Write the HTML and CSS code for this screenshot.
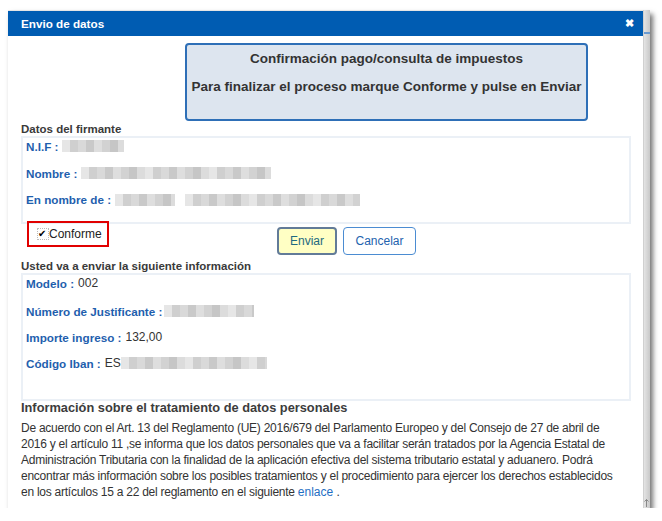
FILE: index.html
```html
<!DOCTYPE html>
<html lang="es">
<head>
<meta charset="utf-8">
<title>Envio de datos</title>
<link rel="stylesheet" href="styles.css">
</head>
<body>
<div class="dialog">
  <div class="dlg-main">
    <div class="titlebar">
      <span class="title">Envio de datos</span>
      <span class="close">&#x2716;</span>
    </div>
    <div class="content">
      <div class="notice">
        <p class="notice-line">Confirmación pago/consulta de impuestos</p>
        <p class="notice-line">Para finalizar el proceso marque Conforme y pulse en Enviar</p>
      </div>

      <div class="section-title">Datos del firmante</div>
      <div class="panel panel-signer">
        <div class="row"><span class="lbl">N.I.F :</span><span class="redact r-nif"></span></div>
        <div class="row"><span class="lbl">Nombre :</span><span class="redact r-name"></span></div>
        <div class="row"><span class="lbl">En nombre de :</span><span class="redact r-onb1"></span><span class="redact r-onb2"></span></div>
      </div>

      <div class="actions">
        <label class="conforme"><span class="check">&#10004;</span>Conforme</label>
        <div class="buttons">
          <button class="btn btn-send">Enviar</button>
          <button class="btn btn-cancel">Cancelar</button>
        </div>
      </div>

      <div class="section-title st2">Usted va a enviar la siguiente información</div>
      <div class="panel panel-info">
        <div class="row"><span class="lbl">Modelo :</span><span class="val">002</span></div>
        <div class="row"><span class="lbl">Número de Justificante :</span><span class="redact r-just"></span></div>
        <div class="row"><span class="lbl">Importe ingreso :</span><span class="val">132,00</span></div>
        <div class="row"><span class="lbl">Código Iban :</span><span class="val">ES</span><span class="redact r-iban"></span></div>
      </div>

      <h2 class="privacy-title">Información sobre el tratamiento de datos personales</h2>
      <p class="privacy-text">De acuerdo con el Art. 13 del Reglamento (UE) 2016/679 del Parlamento Europeo y del Consejo de 27 de abril de 2016 y el artículo 11 ,se informa que los datos personales que va a facilitar serán tratados por la Agencia Estatal de Administración Tributaria con la finalidad de la aplicación efectiva del sistema tributario estatal y aduanero. Podrá encontrar más información sobre los posibles tratamientos y el procedimiento para ejercer los derechos establecidos en los artículos 15 a 22 del reglamento en el siguiente <a class="link" href="#">enlace</a><span class="dot"> .</span></p>
    </div>
  </div>
  <div class="scrollbar">
    <span class="thumb"></span>
    <svg class="arrow" width="5" height="8" viewBox="0 0 5 8"><path d="M2.5 0.5 V8 M0.5 2.5 L2.5 0.5 L4.5 2.5" stroke="#888" stroke-width="1" fill="none"/></svg>
  </div>
</div>
</body>
</html>
```

FILE: styles.css
```css
html, body {
  margin: 0;
  padding: 0;
  background: #ffffff;
}
body {
  font-family: "Liberation Sans", Arial, sans-serif;
  color: #333333;
}
.dialog {
  margin: 10px 0 0 8px;
  width: 642px;
  height: 498px;
  display: flex;
  background: #ffffff;
  box-shadow: 3px 4px 5px rgba(0, 0, 0, 0.55);
  overflow: hidden;
}
.dlg-main {
  flex: 1;
  display: flex;
  flex-direction: column;
  border-top: 1px solid #e6e6e6;
  min-height: 0;
}
.titlebar {
  flex: 0 0 25px;
  height: 25px;
  background: #005cb2;
  color: #fff;
  display: flex;
  align-items: center;
  justify-content: space-between;
  padding: 0 9px 0 13px;
}
.title {
  font-weight: bold;
  font-size: 11.7px;
}
.close {
  font-size: 11px;
  font-weight: bold;
}
.scrollbar {
  width: 6px;
  background: linear-gradient(90deg, #e4e4e4, #c8c8c8);
  border-left: 1px solid #d0d0d0;
  position: relative;
}
.thumb {
  position: absolute;
  top: 22px;
  left: 0;
  width: 6px;
  height: 2px;
  background: #6a9ad0;
}
.arrow {
  position: absolute;
  bottom: 1px;
  left: 0;
}
.content {
  flex: 1 1 auto;
  min-height: 0;
  padding: 7px 12px 0 13px;
}
.notice {
  margin-left: 164px;
  width: 399px;
  height: 68px;
  border: 2px solid #2e6fb7;
  border-radius: 4px;
  background: #dde5ef;
  padding-top: 6px;
}
.notice-line {
  margin: 0 0 13px;
  text-align: center;
  font-weight: bold;
  font-size: 13.5px;
  line-height: 15px;
  color: #333;
}
.section-title {
  font-weight: bold;
  font-size: 11.5px;
  color: #3a3a3a;
  line-height: 13px;
  margin-top: 2px;
}
.st2 {
  margin-top: 2px;
}
.panel {
  border: 2px solid #ebf0f6;
  padding: 0 0 0 3px;
}
.panel-signer {
  height: 84px;
}
.panel-info {
  height: 124px;
}
.row {
  display: flex;
  align-items: center;
  height: 26px;
  font-size: 12px;
}
.panel-signer .row:nth-child(2),
.panel-signer .row:nth-child(3) {
  height: 26.5px;
}
.panel-info .row:first-child,
.panel-signer .row:first-child {
  height: 16px;
  margin-bottom: 7px;
}
.panel-signer .row:first-child {
  margin-bottom: 6px;
}
.lbl {
  color: #1f5fae;
  font-weight: bold;
  font-size: 11.7px;
  margin-right: 4px;
}
.val {
  color: #333;
}
.redact {
  display: inline-block;
  height: 12px;
  filter: blur(0.6px);
  background:
    linear-gradient(90deg,
      #e6e6e6 0 8px, #cfcfcf 8px 16px, #d9d9d9 16px 24px, #c9c9c9 24px 32px,
      #dedede 32px 40px, #d2d2d2 40px 48px, #c6c6c6 48px 56px, #dcdcdc 56px 64px);
  background-size: 64px 12px;
}
.r-nif { width: 62px; }
.r-name { width: 190px; }
.r-onb1 { width: 60px; }
.r-onb2 { width: 175px; margin-left: 10px; }
.r-just { width: 90px; margin-left: -2px; }
.r-iban { width: 146px; }
.actions {
  display: flex;
  align-items: flex-start;
  height: 34px;
}
.conforme {
  margin: -3px 0 0 6px;
  width: 70px;
  height: 22px;
  border: 2px solid #e10000;
  display: flex;
  align-items: center;
  padding-left: 8px;
  font-size: 12px;
  color: #222;
}
.check {
  font-size: 10px;
  line-height: 10px;
  width: 10px;
  height: 10px;
  border: 1px dotted #bbb;
  display: inline-block;
  color: #000;
}
.buttons {
  margin: 3px 0 0 168px;
  display: flex;
  gap: 6px;
}
.btn {
  font-family: "Liberation Sans", Arial, sans-serif;
  font-size: 12px;
  height: 28px;
  border-radius: 4px;
  cursor: pointer;
}
.btn-send {
  width: 60px;
  background: #ffffc4;
  border: 2px solid #627b98;
  color: #1e6a80;
}
.btn-cancel {
  width: 73px;
  background: #ffffff;
  border: 1px solid #4b8cd2;
  color: #2363ae;
}
.privacy-title {
  margin: 0;
  font-size: 12.8px;
  font-weight: bold;
  color: #3c3c3c;
  line-height: 14px;
}
.privacy-text {
  margin: 5px 0 0;
  font-size: 12px;
  line-height: 16px;
  color: #333;
  letter-spacing: -0.25px;
  width: 592px;
}
.link {
  color: #1f6fc4;
  text-decoration: none;
  letter-spacing: 0;
}
.dot {
  letter-spacing: 0;
}
```
